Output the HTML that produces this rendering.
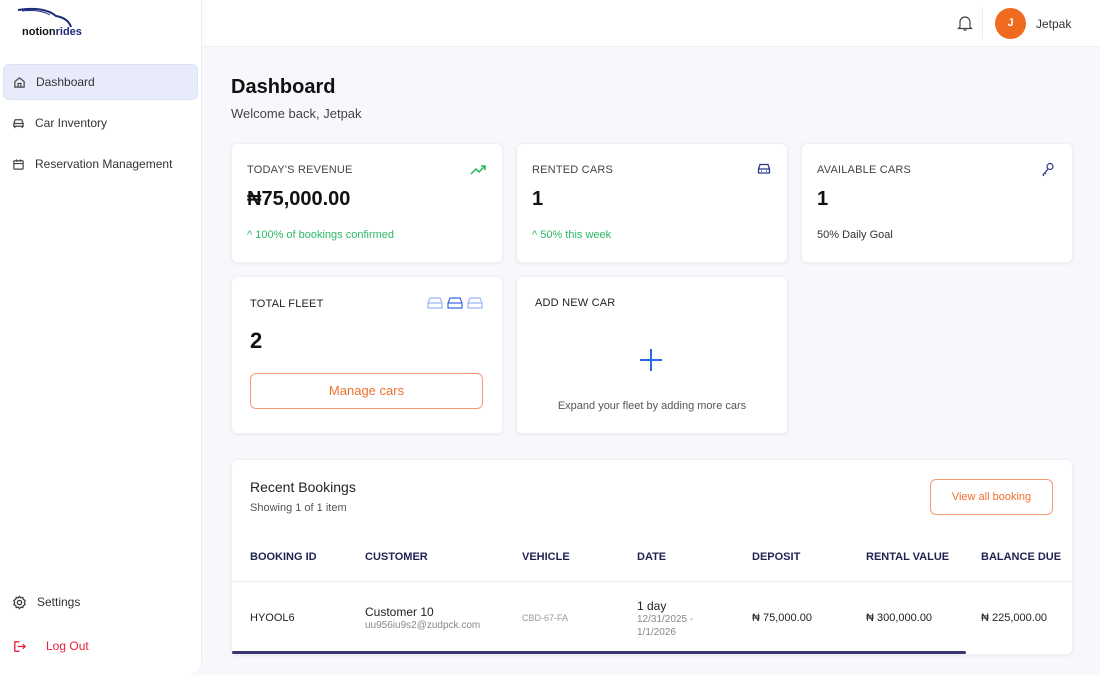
<!DOCTYPE html>
<html><head><meta charset="utf-8"><style>
*{margin:0;padding:0;box-sizing:border-box}
body{width:1100px;height:675px;overflow:hidden;background:#f8f8fc;font-family:"Liberation Sans",sans-serif;color:#222;position:relative}
.side{position:absolute;left:0;top:0;width:202px;height:675px;background:#fff;border-right:1px solid #ececf2;border-bottom-right-radius:14px}
.nav{position:absolute;left:3px;width:195px;height:36px;display:flex;align-items:center;font-size:12px;color:#333}
.nav svg{margin:0 10px 0 9px}
.top{position:absolute;left:202px;top:0;right:0;height:47px;background:#fff;border-bottom:1px solid #f0f0f5}
.card{position:absolute;background:#fff;border-radius:6px;box-shadow:0 1px 3px rgba(0,0,0,.06);border:1px solid #f0f0f4}
.lbl{position:absolute;font-size:11px;color:#444;letter-spacing:.2px}
.big{position:absolute;font-size:20px;font-weight:bold;color:#111}
.sub{position:absolute;font-size:11px}
.th{position:absolute;top:551px;font-size:11px;font-weight:bold;color:#1e2350}
.td{position:absolute;font-size:11px;color:#222}
</style></head><body>
<div class="side">
  <svg style="position:absolute;left:16px;top:6px" width="56" height="22"><path d="M2 4 Q28 0 40 10 Q52 12 55 21" stroke="#1e2a78" stroke-width="2" fill="none"/><path d="M6 5 Q24 3 34 9" stroke="#1e2a78" stroke-width="1" fill="none"/></svg>
  <div style="position:absolute;left:22px;top:26px;font-size:11px;font-weight:bold;color:#111">notion<span style="color:#1e2a78">rides</span></div>
  <div class="nav" style="top:64px;background:#e8ecfa;border-radius:6px;border:1px solid #dde3f5"><svg width="13" height="13" viewBox="0 0 14 14" fill="none" stroke="#444" stroke-width="1.3"><path d="M2 6 L7 2 L12 6 V12 H2 Z M5.5 12 V8 H8.5 V12"/></svg>Dashboard</div>
  <div class="nav" style="top:105px"><svg width="13" height="13" viewBox="0 0 14 14" fill="none" stroke="#444" stroke-width="1.3"><path d="M2 10 V7 L3.5 3 H10.5 L12 7 V10 Z M2 7 H12 M3 10 V12 M11 10 V12"/></svg>Car Inventory</div>
  <div class="nav" style="top:146px"><svg width="13" height="13" viewBox="0 0 14 14" fill="none" stroke="#444" stroke-width="1.3"><rect x="2" y="3" width="10" height="9" rx="1"/><path d="M2 6 H12 M5 1.5 V4 M9 1.5 V4"/></svg>Reservation Management</div>
  <div class="nav" style="top:584px"><svg width="15" height="15" viewBox="0 0 16 16" fill="none" stroke="#333" stroke-width="1.3"><circle cx="8" cy="8" r="2.3"/><path d="M8 1.5 L9.3 3 L11.5 2.6 L12 4.7 L14 5.8 L13.2 8 L14 10.2 L12 11.3 L11.5 13.4 L9.3 13 L8 14.5 L6.7 13 L4.5 13.4 L4 11.3 L2 10.2 L2.8 8 L2 5.8 L4 4.7 L4.5 2.6 L6.7 3 Z"/></svg>Settings</div>
  <div class="nav" style="top:628px;color:#e8203a"><svg width="15" height="15" viewBox="0 0 16 16" fill="none" stroke="#e8203a" stroke-width="1.4" style="margin-right:19px"><path d="M8 3 H3 V13 H8 M6 8 H14 M11.5 5.5 L14 8 L11.5 10.5"/></svg>Log Out</div>
</div>
<div class="top">
  <svg style="position:absolute;left:755px;top:14px" width="16" height="18" viewBox="0 0 16 18" fill="none" stroke="#444" stroke-width="1.2"><path d="M3 13 V8 A5 5 0 0 1 13 8 V13 L14.5 14.5 H1.5 Z M6.5 16 H9.5"/></svg>
  <div style="position:absolute;left:780px;top:7px;width:1px;height:32px;background:#eee"></div>
  <div style="position:absolute;left:793px;top:8px;width:31px;height:31px;border-radius:50%;background:#f06a1f;color:#fff;font-size:11px;font-weight:bold;text-align:center;line-height:31px">J</div>
  <div style="position:absolute;left:834px;top:17px;font-size:12px;color:#333">Jetpak</div>
</div>
<div style="position:absolute;left:231px;top:76px;font-size:20px;font-weight:bold;color:#111">Dashboard</div>
<div style="position:absolute;left:231px;top:106px;font-size:13px;color:#444">Welcome back, Jetpak</div>

<div class="card" style="left:231px;top:143px;width:272px;height:120px"></div>
<div class="lbl" style="left:247px;top:164px">TODAY'S REVENUE</div>
<svg style="position:absolute;left:470px;top:164px" width="16" height="11" viewBox="0 0 16 11" fill="none" stroke="#22b85a" stroke-width="1.5"><path d="M1 10 L6 5 L9 8 L15 2 M11 2 H15 V6"/></svg>
<div class="big" style="left:247px;top:188px">₦75,000.00</div>
<div class="sub" style="left:247px;top:229px;color:#2bb866">^ 100% of bookings confirmed</div>

<div class="card" style="left:516px;top:143px;width:272px;height:120px"></div>
<div class="lbl" style="left:532px;top:164px">RENTED CARS</div>
<svg style="position:absolute;left:757px;top:163px" width="14" height="13" viewBox="0 0 14 13" fill="none" stroke="#2a3a8a" stroke-width="1.3"><path d="M1.5 10 V6 L3 1.5 H11 L12.5 6 V10 Z M1.5 6 H12.5 M4 8 H5 M9 8 H10"/></svg>
<div class="big" style="left:532px;top:188px">1</div>
<div class="sub" style="left:532px;top:229px;color:#2bb866">^ 50% this week</div>

<div class="card" style="left:801px;top:143px;width:272px;height:120px"></div>
<div class="lbl" style="left:817px;top:164px">AVAILABLE CARS</div>
<svg style="position:absolute;left:1041px;top:162px" width="14" height="15" viewBox="0 0 14 15" fill="none" stroke="#2a3a8a" stroke-width="1.2"><circle cx="9" cy="4.5" r="3"/><path d="M7 7 L2 13 L3 14 M4 11 L5 12"/></svg>
<div class="big" style="left:817px;top:188px">1</div>
<div class="sub" style="left:817px;top:229px;color:#333">50% Daily Goal</div>

<div class="card" style="left:231px;top:276px;width:272px;height:158px"></div>
<div class="lbl" style="left:250px;top:298px;color:#222">TOTAL FLEET</div>
<svg style="position:absolute;left:427px;top:296px" width="56" height="15" viewBox="0 0 56 15" fill="none" stroke-width="1.2"><g stroke="#9ab8f5"><path d="M1 12 V7 L3 2 H13 L15 7 V12 Z M1 7 H15"/><path d="M41 12 V7 L43 2 H53 L55 7 V12 Z M41 7 H55"/></g><path stroke="#3a6ae0" d="M21 12 V7 L23 2 H33 L35 7 V12 Z M21 7 H35"/></svg>
<div class="big" style="left:250px;top:328px;font-size:22px">2</div>
<div style="position:absolute;left:250px;top:373px;width:233px;height:36px;border:1px solid #f59a73;border-radius:6px;color:#f07030;font-size:13px;text-align:center;line-height:34px">Manage cars</div>

<div class="card" style="left:516px;top:276px;width:272px;height:158px"></div>
<div class="lbl" style="left:535px;top:297px;color:#222">ADD NEW CAR</div>
<div style="position:absolute;left:640px;top:349px;width:22px;height:22px"><div style="position:absolute;left:10px;top:0;width:2px;height:22px;background:#2a6ae8"></div><div style="position:absolute;left:0;top:10px;width:22px;height:2px;background:#2a6ae8"></div></div>
<div style="position:absolute;left:516px;width:272px;top:400px;text-align:center;font-size:11px;color:#555">Expand your fleet by adding more cars</div>

<div class="card" style="left:231px;top:459px;width:842px;height:196px"></div>
<div style="position:absolute;left:250px;top:479px;font-size:14px;color:#222">Recent Bookings</div>
<div style="position:absolute;left:250px;top:502px;font-size:11px;color:#555">Showing 1 of 1 item</div>
<div style="position:absolute;left:930px;top:479px;width:123px;height:36px;border:1px solid #f59a73;border-radius:6px;color:#f07030;font-size:11px;text-align:center;line-height:34px">View all booking</div>
<div class="th" style="left:250px">BOOKING ID</div>
<div class="th" style="left:365px">CUSTOMER</div>
<div class="th" style="left:522px">VEHICLE</div>
<div class="th" style="left:637px">DATE</div>
<div class="th" style="left:752px">DEPOSIT</div>
<div class="th" style="left:866px">RENTAL VALUE</div>
<div class="th" style="left:981px">BALANCE DUE</div>
<div style="position:absolute;left:232px;top:581px;width:840px;height:1px;background:#eee"></div>
<div class="td" style="left:250px;top:612px">HYOOL6</div>
<div class="td" style="left:365px;top:605px;font-size:12px">Customer 10</div>
<div class="td" style="left:365px;top:620px;font-size:10px;color:#888">uu956iu9s2@zudpck.com</div>
<div class="td" style="left:522px;top:613px;font-size:9px;color:#999">CBD-67-FA</div>
<div class="td" style="left:637px;top:599px;font-size:12px">1 day</div>
<div class="td" style="left:637px;top:613px;font-size:10px;color:#888;line-height:13px">12/31/2025 -<br>1/1/2026</div>
<div class="td" style="left:752px;top:612px">₦ 75,000.00</div>
<div class="td" style="left:866px;top:612px">₦ 300,000.00</div>
<div class="td" style="left:981px;top:612px">₦ 225,000.00</div>
<div style="position:absolute;left:232px;top:651px;width:734px;height:3px;background:#3a3670;border-radius:2px"></div>
</body></html>
